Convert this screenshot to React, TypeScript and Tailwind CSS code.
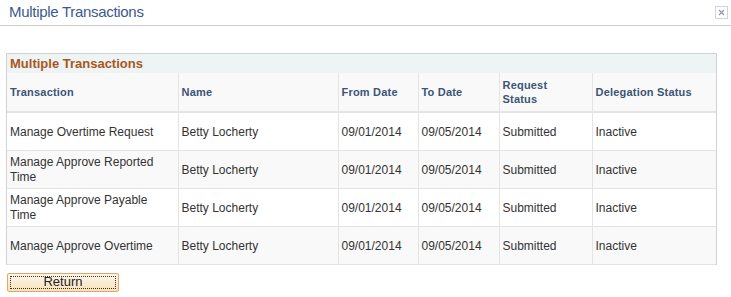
const rows = [
  { tx: 'Manage Overtime Request', name: 'Betty Locherty', from: '09/01/2014', to: '09/05/2014', req: 'Submitted', del: 'Inactive' },
  { tx: 'Manage Approve Reported Time', name: 'Betty Locherty', from: '09/01/2014', to: '09/05/2014', req: 'Submitted', del: 'Inactive' },
  { tx: 'Manage Approve Payable Time', name: 'Betty Locherty', from: '09/01/2014', to: '09/05/2014', req: 'Submitted', del: 'Inactive' },
  { tx: 'Manage Approve Overtime', name: 'Betty Locherty', from: '09/01/2014', to: '09/05/2014', req: 'Submitted', del: 'Inactive' },
];

const headers = ['Transaction', 'Name', 'From Date', 'To Date', 'Request Status', 'Delegation Status'];
const widths = ['w-[171px]', 'w-[160px]', 'w-[80px]', 'w-[81px]', 'w-[93px]', 'w-[124px]'];

export default function App() {
  return (
    <div className="w-[731px] h-[297px] bg-white font-['Liberation_Sans',Arial,sans-serif] text-[12px] text-[#333]">
      <div className="flex h-[26px] items-center justify-between border-b border-[#cfcfd4] pl-[9px] pr-[3px]">
        <span className="text-[15px] text-[#3c5a8f] tracking-[-0.3px]">Multiple Transactions</span>
        <span className="flex h-[13px] w-[13px] items-center justify-center border border-[#d4d4d8] bg-white">
          <svg width="7" height="7" viewBox="0 0 7 7">
            <path d="M1 1L6 6M6 1L1 6" stroke="#9b93b5" strokeWidth="1.3" />
          </svg>
        </span>
      </div>

      <div className="ml-[6px] mt-[27px] w-[711px] border border-[#cfd2d6] border-b-0">
        <div className="h-[19px] bg-[#eef3f3] pl-[3px] text-[13px] font-bold leading-[19px] text-[#a9561e]">
          Multiple Transactions
        </div>
        <table className="w-full table-fixed border-collapse">
          <thead>
            <tr className="h-[39px] bg-[#f9f9f9] border-b-2 border-[#e4e4e4]">
              {headers.map((h, i) => (
                <th
                  key={h}
                  className={`${widths[i]} border-l border-[#e4e4e4] first:border-l-0 px-[3px] text-left align-middle text-[11px] font-bold leading-[14px] tracking-[0.2px] text-[#3b5577]`}
                >
                  {h === 'Request Status' ? (
                    <>
                      Request
                      <br />
                      Status
                    </>
                  ) : (
                    h
                  )}
                </th>
              ))}
            </tr>
          </thead>
          <tbody>
            {rows.map((r, i) => (
              <tr key={i} className={`h-[38px] border-b border-[#e4e4e4] ${i % 2 ? 'bg-[#f9f9f9]' : 'bg-white'}`}>
                {[r.tx, r.name, r.from, r.to, r.req, r.del].map((c, j) => (
                  <td
                    key={j}
                    className="border-l border-[#e4e4e4] first:border-l-0 px-[3px] pt-[2px] align-middle leading-[15px]"
                  >
                    {c}
                  </td>
                ))}
              </tr>
            ))}
          </tbody>
        </table>
      </div>

      <div className="ml-[7px] mt-[8px]">
        <button className="flex h-[19px] w-[112px] items-center justify-center rounded-[2px] border border-[#e2a56a] bg-gradient-to-b from-[#fdf6e9] to-[#f7e2bc] p-[2px] text-[13px] text-[#222]">
          <span className="flex h-full w-full items-center justify-center border border-dotted border-[#333]">Return</span>
        </button>
      </div>
    </div>
  );
}
